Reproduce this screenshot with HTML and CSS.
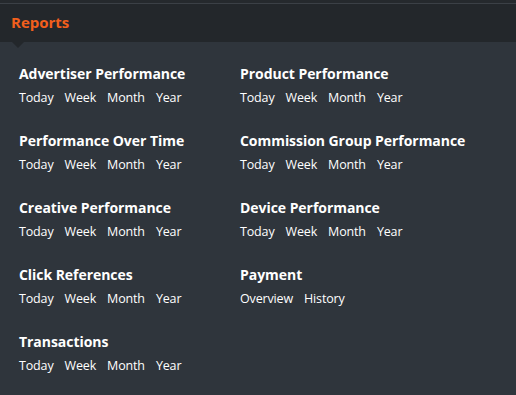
FILE: index.html
```html
<!DOCTYPE html>
<html>
<head>
<meta charset="utf-8">
<link rel="stylesheet" href="styles.css">
</head>
<body>
<div class="topline"></div>
<header class="head"><span class="title">Reports</span><span class="notch"></span></header>
<main class="grid">
  <section class="item"><h2>Advertiser Performance</h2><nav><a>Today</a><a>Week</a><a>Month</a><a>Year</a></nav></section>
  <section class="item"><h2>Product Performance</h2><nav><a>Today</a><a>Week</a><a>Month</a><a>Year</a></nav></section>
  <section class="item"><h2>Performance Over Time</h2><nav><a>Today</a><a>Week</a><a>Month</a><a>Year</a></nav></section>
  <section class="item"><h2>Commission Group Performance</h2><nav><a>Today</a><a>Week</a><a>Month</a><a>Year</a></nav></section>
  <section class="item"><h2>Creative Performance</h2><nav><a>Today</a><a>Week</a><a>Month</a><a>Year</a></nav></section>
  <section class="item"><h2>Device Performance</h2><nav><a>Today</a><a>Week</a><a>Month</a><a>Year</a></nav></section>
  <section class="item"><h2>Click References</h2><nav><a>Today</a><a>Week</a><a>Month</a><a>Year</a></nav></section>
  <section class="item"><h2>Payment</h2><nav><a>Overview</a><a>History</a></nav></section>
  <section class="item"><h2>Transactions</h2><nav><a>Today</a><a>Week</a><a>Month</a><a>Year</a></nav></section>
</main>
</body>
</html>
```
FILE: styles.css
```css
html, body { margin: 0; padding: 0; }
body {
  background: #2f353c;
  font-family: "Open Sans", "Noto Sans", sans-serif;
  color: #fff;
  width: 516px;
  height: 395px;
  overflow: hidden;
}
.topline {
  height: 3px;
  background: #25292d;
  border-bottom: 1px solid #3b4046;
}
.head {
  position: relative;
  height: 38px;
  background: #23272b;
  display: flex;
  align-items: center;
  padding-left: 11px;
}
.title {
  color: #f25f1c;
  font-weight: 700;
  font-size: 15px;
  margin-top: -2px;
}
.notch {
  position: absolute;
  left: 12px;
  bottom: -6px;
  width: 0; height: 0;
  border-left: 6px solid transparent;
  border-right: 6px solid transparent;
  border-top: 6px solid #23272b;
}
.grid {
  display: grid;
  grid-template-columns: 221px 1fr;
  padding: 22px 0 0 19px;
  row-gap: 22px;
}
.item h2 {
  margin: 0;
  font-size: 14px;
  font-weight: 700;
  line-height: 20px;
  letter-spacing: -0.05px;
}
.item nav {
  display: flex;
  gap: 11px;
  margin-top: 2px;
  font-size: 12.5px;
  line-height: 23px;
  letter-spacing: -0.15px;
}
.item a { color: #fff; }
```
